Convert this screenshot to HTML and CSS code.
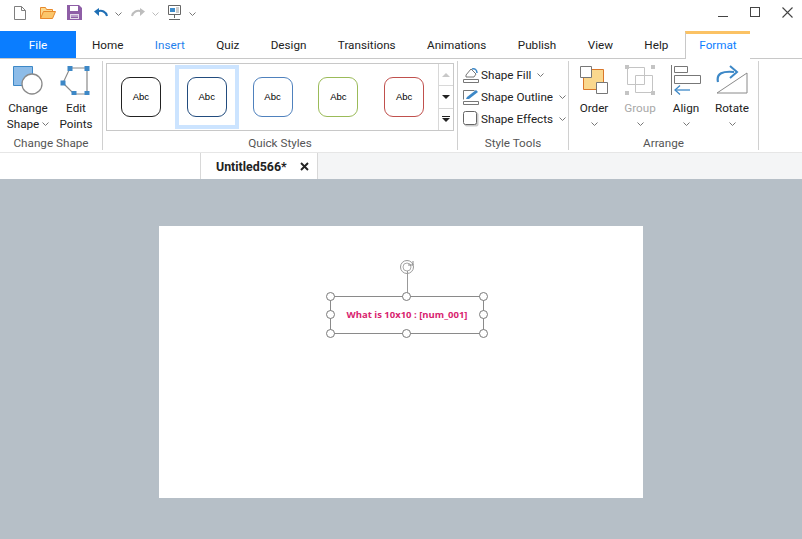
FILE: index.html
```html
<!DOCTYPE html>
<html lang="en">
<head>
    <meta charset="UTF-8">
    <title>Untitled566*</title>
    <link rel="stylesheet" href="styles.css">
</head>
<body>
    <div class="titlebar">
        <div class="quick">
            <svg class="qa-new" width="12" height="14" viewBox="0 0 12 14"><path d="M.5.5h7l4 4v9H.5zM7.500.5v4h4" fill="#fff" stroke="#7f7f7f"/></svg>
            <svg class="qa-open" width="16" height="13" viewBox="0 0 16 13"><path d="M.5 12.500V1.500h5l1 2h6v2" fill="#fcd98e" stroke="#e8892b"/><path d="M.5 12.500l3-7h12l-3 7z" fill="#fbc66b" stroke="#e8892b"/></svg>
            <svg class="qa-save" width="15" height="15" viewBox="0 0 15 15"><path d="M0 0h12l3 3v12H0z" fill="#8e5ea6"/><path d="M3 1h8v5H3z" fill="#fff"/><path d="M3 9h9v5H3z" fill="#e5dcea"/><path d="M4 11h7M4 12.500h7" stroke="#8e5ea6"/></svg>
            <svg class="qa-undo" width="14" height="10" viewBox="0 0 14 10"><path d="M13 8C12 4 8 1.500 3.500 3.500" fill="none" stroke="#1f6fb5" stroke-width="2"/><path d="M0 3.500L5 0v8z" fill="#1f6fb5"/></svg>
            <svg class="chev qa-chev" width="7" height="4" viewBox="0 0 7 4"><path d="M.5.500l3 3 3-3" fill="none" stroke="#777"/></svg>
            <svg class="qa-redo" width="14" height="10" viewBox="0 0 14 10"><path d="M1 8C2 4 6 1.500 10.500 3.500" fill="none" stroke="#bdbdbd" stroke-width="2"/><path d="M14 3.500L9 0v8z" fill="#bdbdbd"/></svg>
            <svg class="chev qa-chev" width="7" height="4" viewBox="0 0 7 4"><path d="M.5.500l3 3 3-3" fill="none" stroke="#bbb"/></svg>
            <svg class="qa-show" width="15" height="15" viewBox="0 0 15 15"><path d="M1.500.500h12v9h-12z" fill="#fff" stroke="#666"/><path d="M3 3h5v4H3z" fill="#3e8ccb"/><path d="M9 3h3M9 5h3M9 7h3" stroke="#999"/><path d="M7.500 10v3M2 14.500h11" stroke="#666"/></svg>
            <svg class="chev qa-chev" width="7" height="4" viewBox="0 0 7 4"><path d="M.5.500l3 3 3-3" fill="none" stroke="#777"/></svg>
        </div>
        <div class="winbtns">
            <span class="win-min"></span>
            <span class="win-max"></span>
            <svg width="11" height="11" viewBox="0 0 11 11"><path d="M.5.500l10 10M10.500.500l-10 10" stroke="#444" stroke-width="1.100"/></svg>
        </div>
    </div>

    <div class="tabs">
        <div class="tab-file">File</div>
        <div class="tab-list">
            <span>Home</span>
            <span class="blue">Insert</span>
            <span>Quiz</span>
            <span>Design</span>
            <span>Transitions</span>
            <span>Animations</span>
            <span>Publish</span>
            <span>View</span>
            <span>Help</span>
        </div>
        <div class="tab-format">Format</div>
    </div>

    <div class="ribbon">
        <div class="group g-change">
            <div class="group-body">
                <div class="big">
                    <svg width="32" height="30" viewBox="0 0 32 30"><path d="M1.500 1.500h19v19h-19z" fill="#8dbce8" stroke="#3d88c7"/><circle cx="20" cy="19" r="10" fill="#fff" stroke="#8a8a8a" stroke-width="1.300"/></svg>
                    <div class="big-text">Change<br>Shape <svg class="chev" width="7" height="4" viewBox="0 0 7 4"><path d="M.5.500l3 3 3-3" fill="none" stroke="#777"/></svg></div>
                </div>
                <div class="big">
                    <svg width="32" height="30" viewBox="0 0 32 30"><path d="M10 3h17v26H14L3 18z" fill="none" stroke="#8a8a8a" stroke-width="1.200"/><path d="M7.500 1h5v5h-5zM24.500 1h5v5h-5zM.5 15.500h5v5h-5zM11.500 26h5v4h-5zM24.500 26h5v4h-5z" fill="#3d88c7"/></svg>
                    <div class="big-text">Edit<br>Points</div>
                </div>
            </div>
            <div class="group-label">Change Shape</div>
        </div>

        <div class="group g-quick">
            <div class="group-body">
                <div class="gallery">
                    <div class="cell"><div class="abc abc-black">Abc</div></div>
                    <div class="cell cell-on"><div class="abc abc-navy">Abc</div></div>
                    <div class="cell"><div class="abc abc-blue">Abc</div></div>
                    <div class="cell"><div class="abc abc-green">Abc</div></div>
                    <div class="cell"><div class="abc abc-red">Abc</div></div>
                    <div class="gallery-nav">
                        <div class="nav-btn"><span class="tri-up"></span></div>
                        <div class="nav-btn"><span class="tri-down"></span></div>
                        <div class="nav-btn nav-more"><span class="bar"></span><span class="tri-down"></span></div>
                    </div>
                </div>
            </div>
            <div class="group-label">Quick Styles</div>
        </div>

        <div class="group g-tools">
            <div class="group-body tools">
                <div class="tool">
                    <svg width="16" height="16" viewBox="0 0 16 16"><path d="M3 8l5-6 5 5-2 3H3z" fill="#fff" stroke="#777"/><path d="M9 2c3-1 5 1 5 4" fill="none" stroke="#3d88c7" stroke-width="1.500"/><path d="M.5 12.500h15v3H.5z" fill="#fff" stroke="#777"/></svg>
                    <span>Shape Fill</span>
                    <svg class="chev" width="7" height="4" viewBox="0 0 7 4"><path d="M.5.500l3 3 3-3" fill="none" stroke="#777"/></svg>
                </div>
                <div class="tool">
                    <svg width="16" height="16" viewBox="0 0 16 16"><path d="M.5 10.500v-9h11" fill="none" stroke="#777"/><path d="M3 10l1-2 9-7 2 2-9 7z" fill="#3d88c7"/><path d="M.5 12.500h15v3H.5z" fill="#fff" stroke="#777"/></svg>
                    <span>Shape Outline</span>
                    <svg class="chev" width="7" height="4" viewBox="0 0 7 4"><path d="M.5.500l3 3 3-3" fill="none" stroke="#777"/></svg>
                </div>
                <div class="tool">
                    <svg width="16" height="16" viewBox="0 0 16 16"><rect x="1.500" y="1.500" width="14" height="14" rx="2" fill="#ccc"/><rect x=".5" y=".5" width="13" height="13" rx="2" fill="#fff" stroke="#666"/></svg>
                    <span>Shape Effects</span>
                    <svg class="chev" width="7" height="4" viewBox="0 0 7 4"><path d="M.5.500l3 3 3-3" fill="none" stroke="#777"/></svg>
                </div>
            </div>
            <div class="group-label">Style Tools</div>
        </div>

        <div class="group g-arrange">
            <div class="group-body">
                <div class="big arr">
                    <svg width="30" height="30" viewBox="0 0 30 30"><path d="M4.500 4.500h20v20h-20z" fill="#fad88e" stroke="#d9772a"/><path d="M1.500 1.500h11v11h-11zM17.500 17.500h11v11h-11z" fill="#fff" stroke="#777"/></svg>
                    <div class="big-text">Order</div>
                    <svg class="chev" width="7" height="4" viewBox="0 0 7 4"><path d="M.5.500l3 3 3-3" fill="none" stroke="#777"/></svg>
                </div>
                <div class="big arr off">
                    <svg width="30" height="30" viewBox="0 0 30 30"><path d="M2.500 2.500h17v17h-17zM10.500 10.500h17v17h-17z" fill="none" stroke="#c4c4c4"/><path d="M0 0h4v4H0zM26 0h4v4h-4zM0 26h4v4H0zM26 26h4v4h-4z" fill="#c4c4c4"/></svg>
                    <div class="big-text">Group</div>
                    <svg class="chev" width="7" height="4" viewBox="0 0 7 4"><path d="M.5.500l3 3 3-3" fill="none" stroke="#777"/></svg>
                </div>
                <div class="big arr">
                    <svg width="30" height="30" viewBox="0 0 30 30"><path d="M.5 0v30" stroke="#777"/><path d="M3.500 1.500h13v6h-13zM3.500 10.500h26v8h-26z" fill="#fff" stroke="#777"/><path d="M4 25h15" stroke="#3d88c7" stroke-width="1.300"/><path d="M9 20.500L4 25l5 4.500" fill="none" stroke="#3d88c7" stroke-width="1.300"/></svg>
                    <div class="big-text">Align</div>
                    <svg class="chev" width="7" height="4" viewBox="0 0 7 4"><path d="M.5.500l3 3 3-3" fill="none" stroke="#777"/></svg>
                </div>
                <div class="big arr">
                    <svg width="32" height="30" viewBox="0 0 32 30"><path d="M1 28L31 8v20z" fill="#fff" stroke="#8a8a8a"/><path d="M2 17c-2-9 5-11 16-10" fill="none" stroke="#3d88c7" stroke-width="2.200"/><path d="M14 1l7 6-7 6" fill="none" stroke="#3d88c7" stroke-width="2"/></svg>
                    <div class="big-text">Rotate</div>
                    <svg class="chev" width="7" height="4" viewBox="0 0 7 4"><path d="M.5.500l3 3 3-3" fill="none" stroke="#777"/></svg>
                </div>
            </div>
            <div class="group-label">Arrange</div>
        </div>
    </div>

    <div class="docbar">
        <div class="doc-left"></div>
        <div class="doc-tab">
            <b>Untitled566*</b>
            <svg width="9" height="9" viewBox="0 0 9 9"><path d="M1 1l7 7M8 1L1 8" stroke="#222" stroke-width="1.900"/></svg>
        </div>
    </div>

    <div class="canvas">
        <div class="slide">
            <svg class="rotate" width="16" height="16" viewBox="0 0 16 16"><circle cx="8" cy="8" r="6.500" fill="none" stroke="#999" stroke-width="1"/><circle cx="8" cy="8" r="4" fill="none" stroke="#aaa" stroke-width="1"/><path d="M9 6h5v-4" fill="none" stroke="#888"/></svg>
            <div class="sel">
                <div class="sel-stem"></div>
                <span class="h h-tl"></span><span class="h h-tc"></span><span class="h h-tr"></span>
                <span class="h h-ml"></span><span class="h h-mr"></span>
                <span class="h h-bl"></span><span class="h h-bc"></span><span class="h h-br"></span>
                <div class="sel-text">What is 10x10 : [num_001]</div>
            </div>
        </div>
    </div>
</body>
</html>
```
FILE: styles.css
```css
/* page */
* { box-sizing: border-box; }
html, body { height: 100%; }
body { margin: 0; overflow: hidden; display: flex; flex-direction: column; background: #fff; font-family: Roboto, "Noto Sans", sans-serif; font-size: 11.700px; color: #222; }
svg { display: block; flex: none; }

/* title bar */
.titlebar { height: 31px; display: flex; justify-content: space-between; }
.quick { display: flex; align-items: center; padding: 0 0 6px 14px; }
.qa-new { margin-right: 14px; }
.qa-open { margin-right: 11px; }
.qa-save { margin-right: 12px; }
.qa-chev { margin: 2px 8px 0 7px; }
.qa-redo { margin-left: 1px; }
.winbtns { display: flex; align-items: flex-start; padding: 7px 9px 0 0; }
.win-min { width: 10px; height: 10px; border-bottom: 1px solid #444; margin-right: 22px; }
.win-max { width: 10px; height: 10px; border: 1px solid #444; margin-right: 22px; }

/* tabs */
.tabs { height: 28px; display: flex; align-items: stretch; border-bottom: 1px solid #c8c8c8; line-height: 28px; }
.tab-file { width: 76px; background: #0a7dff; color: #fff; text-align: center; }
.tab-list { display: flex; gap: 31.400px; padding-left: 16px; width: 609px; }
.blue { color: #1f7fec; }
.tab-format { width: 65px; margin-bottom: -1px; background: #fff; color: #0a7dff; text-align: center; border-left: 1px solid #c8c8c8; border-top: 3px solid #fbc264; line-height: 22px; }

/* ribbon */
.ribbon { height: 93px; display: flex; }
.group { display: flex; flex-direction: column; height: 89px; margin-top: 2px; border-right: 1px solid #d0d0d0; }
.group-body { flex: 1; display: flex; }
.group-label { height: 14px; line-height: 14px; text-align: center; color: #555; margin-bottom: 0; }
.g-change { width: 103px; }
.g-change .group-body { padding: 4px 2px 0 4px; }
.g-quick { width: 355px; }
.g-tools { width: 111px; }
.g-arrange { width: 190px; }
.g-arrange .group-body { padding: 4px 0 0 2px; }

/* large buttons */
.big { width: 48px; display: flex; flex-direction: column; align-items: center; }
.big-text { margin-top: 6px; line-height: 15.500px; text-align: center; }
.big-text .chev { display: inline-block; vertical-align: middle; }
.arr { width: 46px; }
.arr .big-text { margin-top: 6px; }
.arr .chev { margin-top: 5px; }
.off .big-text { color: #a8a8a8; }

/* quick styles */
.g-quick .group-body { padding: 2px 0 0 3px; }
.gallery { width: 348px; height: 68px; border: 1px solid #c8c8c8; padding-left: 1px; display: flex; }
.cell { width: 66px; display: flex; align-items: center; justify-content: center; border: 1px solid transparent; }
.cell-on { border: 4px solid #cce4ff; margin: 1px; width: 64px; height: 64px; }
.abc { width: 40px; height: 40px; padding-bottom: 1px; border-radius: 9px; border: 1px solid #222; display: flex; align-items: center; justify-content: center; font-family: "Liberation Sans", sans-serif; font-size: 9.500px; color: #000; }
.abc-navy { border-color: #224c7e; }
.abc-blue { border-color: #4f81bd; }
.abc-green { border-color: #9bbb59; }
.abc-red { border-color: #c0504d; }
.gallery-nav { width: 15px; margin-left: 1px; border-left: 1px solid #d8d8d8; display: flex; flex-direction: column; }
.nav-btn { flex: 1; display: flex; align-items: center; justify-content: center; border-bottom: 1px solid #d8d8d8; }
.nav-btn:last-child { border-bottom: 0; }
.tri-up { border: 4px solid transparent; border-top: 0; border-bottom: 4px solid #c8c8c8; }
.tri-down { border: 4px solid transparent; border-bottom: 0; border-top: 4px solid #222; }
.nav-more { flex-direction: column; gap: 1px; }
.bar { width: 8px; height: 1px; background: #222; }

/* style tools */
.tools { flex-direction: column; padding: 3px 0 0 5px; }
.tool { height: 22px; display: flex; align-items: center; gap: 2px; white-space: nowrap; }
.tool .chev { margin-left: 4px; }

/* document tabs */
.docbar { height: 27px; display: flex; background: #f4f5f6; border-top: 1px solid #e6e6e6; }
.doc-left { width: 201px; background: #fff; border-right: 1px solid #d8d8d8; }
.doc-tab { width: 117px; display: flex; align-items: center; justify-content: space-between; padding: 0 8px 0 15px; background: #fff; border-right: 1px solid #d8d8d8; font-size: 12.400px; color: #222; }

/* canvas */
.canvas { flex: 1; background: #b6bfc7; display: flex; justify-content: center; padding-top: 47px; }
.slide { position: relative; width: 484px; height: 272px; background: #fff; }
.rotate { position: absolute; left: 240px; top: 33px; }
.sel { position: absolute; left: 171px; top: 70px; width: 154px; height: 38px; border: 1px solid #8a8a8a; }
.sel-stem { position: absolute; left: 76px; top: -26px; width: 1px; height: 26px; background: #999; }
.h { position: absolute; width: 9px; height: 9px; border-radius: 50%; background: #fff; border: 1.700px solid #7a7a7a; }
.h-tl { left: -5px; top: -5px; }
.h-tc { left: 71px; top: -5px; }
.h-tr { right: -5px; top: -5px; }
.h-ml { left: -5px; top: 13px; }
.h-mr { right: -5px; top: 13px; }
.h-bl { left: -5px; bottom: -5px; }
.h-bc { left: 71px; bottom: -5px; }
.h-br { right: -5px; bottom: -5px; }
.sel-text { height: 100%; padding-bottom: 1px; display: flex; align-items: center; justify-content: center; font-family: "Open Sans", sans-serif; font-size: 9.500px; font-weight: 700; color: #d8246f; }
```
